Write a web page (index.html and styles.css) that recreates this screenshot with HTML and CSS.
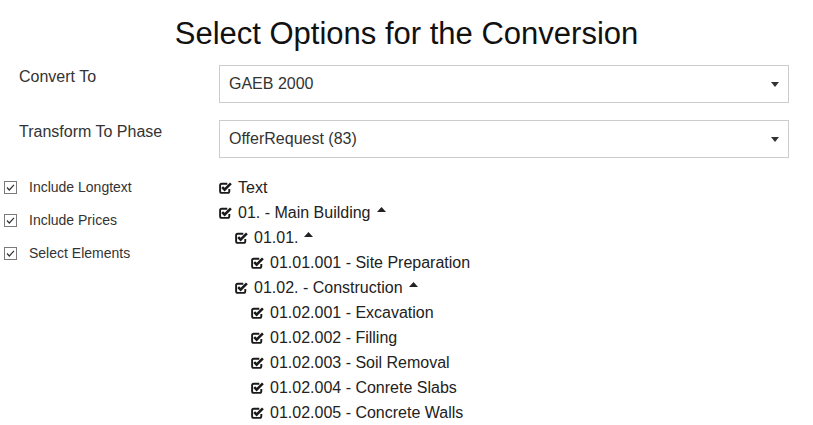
FILE: index.html
```html
<!DOCTYPE html>
<html lang="en">
<head>
<meta charset="utf-8">
<title>Select Options for the Conversion</title>
<link rel="stylesheet" href="styles.css">
</head>
<body>
<div class="page">
  <h1 class="title">Select Options for the Conversion</h1>

  <div class="form-row">
    <label class="form-label">Convert To</label>
    <div class="select">
      <span>GAEB 2000</span>
      <svg class="select-arrow" width="8" height="5" viewBox="0 0 8 5"><path d="M0 0H8L4 5Z"/></svg>
    </div>
  </div>

  <div class="form-row">
    <label class="form-label">Transform To Phase</label>
    <div class="select">
      <span>OfferRequest (83)</span>
      <svg class="select-arrow" width="8" height="5" viewBox="0 0 8 5"><path d="M0 0H8L4 5Z"/></svg>
    </div>
  </div>

  <div class="options">
    <ul class="side-opts">
      <li class="side-opt">
        <svg class="cb" width="13" height="13" viewBox="0 0 13 13"><rect x="0.5" y="0.5" width="12" height="12" class="cb-box"/><path d="M3 6.5L5.3 9L10 3.8" class="cb-check"/></svg>
        <span>Include Longtext</span>
      </li>
      <li class="side-opt">
        <svg class="cb" width="13" height="13" viewBox="0 0 13 13"><rect x="0.5" y="0.5" width="12" height="12" class="cb-box"/><path d="M3 6.5L5.3 9L10 3.8" class="cb-check"/></svg>
        <span>Include Prices</span>
      </li>
      <li class="side-opt">
        <svg class="cb" width="13" height="13" viewBox="0 0 13 13"><rect x="0.5" y="0.5" width="12" height="12" class="cb-box"/><path d="M3 6.5L5.3 9L10 3.8" class="cb-check"/></svg>
        <span>Select Elements</span>
      </li>
    </ul>

    <ul class="tree">
      <li class="node lvl0"><svg class="chk" width="13" height="12" viewBox="0 0 13 12"><path class="chk-box" d="M8.3 1.7H2.7Q1.1 1.7 1.1 3.3V9.3Q1.1 10.9 2.7 10.9H8.7Q10.3 10.9 10.3 9.3V7"/><path class="chk-mark" d="M3.2 5.2L5.6 7.6L11.9 1.3"/></svg>Text</li>
      <li class="node lvl0"><svg class="chk" width="13" height="12" viewBox="0 0 13 12"><path class="chk-box" d="M8.3 1.7H2.7Q1.1 1.7 1.1 3.3V9.3Q1.1 10.9 2.7 10.9H8.7Q10.3 10.9 10.3 9.3V7"/><path class="chk-mark" d="M3.2 5.2L5.6 7.6L11.9 1.3"/></svg>01. - Main Building<svg class="caret" width="9" height="5" viewBox="0 0 9 5"><path d="M0 5H9L4.5 0Z"/></svg></li>
      <li class="node lvl1"><svg class="chk" width="13" height="12" viewBox="0 0 13 12"><path class="chk-box" d="M8.3 1.7H2.7Q1.1 1.7 1.1 3.3V9.3Q1.1 10.9 2.7 10.9H8.7Q10.3 10.9 10.3 9.3V7"/><path class="chk-mark" d="M3.2 5.2L5.6 7.6L11.9 1.3"/></svg>01.01.<svg class="caret" width="9" height="5" viewBox="0 0 9 5"><path d="M0 5H9L4.5 0Z"/></svg></li>
      <li class="node lvl2"><svg class="chk" width="13" height="12" viewBox="0 0 13 12"><path class="chk-box" d="M8.3 1.7H2.7Q1.1 1.7 1.1 3.3V9.3Q1.1 10.9 2.7 10.9H8.7Q10.3 10.9 10.3 9.3V7"/><path class="chk-mark" d="M3.2 5.2L5.6 7.6L11.9 1.3"/></svg>01.01.001 - Site Preparation</li>
      <li class="node lvl1"><svg class="chk" width="13" height="12" viewBox="0 0 13 12"><path class="chk-box" d="M8.3 1.7H2.7Q1.1 1.7 1.1 3.3V9.3Q1.1 10.9 2.7 10.9H8.7Q10.3 10.9 10.3 9.3V7"/><path class="chk-mark" d="M3.2 5.2L5.6 7.6L11.9 1.3"/></svg>01.02. - Construction<svg class="caret" width="9" height="5" viewBox="0 0 9 5"><path d="M0 5H9L4.5 0Z"/></svg></li>
      <li class="node lvl2"><svg class="chk" width="13" height="12" viewBox="0 0 13 12"><path class="chk-box" d="M8.3 1.7H2.7Q1.1 1.7 1.1 3.3V9.3Q1.1 10.9 2.7 10.9H8.7Q10.3 10.9 10.3 9.3V7"/><path class="chk-mark" d="M3.2 5.2L5.6 7.6L11.9 1.3"/></svg>01.02.001 - Excavation</li>
      <li class="node lvl2"><svg class="chk" width="13" height="12" viewBox="0 0 13 12"><path class="chk-box" d="M8.3 1.7H2.7Q1.1 1.7 1.1 3.3V9.3Q1.1 10.9 2.7 10.9H8.7Q10.3 10.9 10.3 9.3V7"/><path class="chk-mark" d="M3.2 5.2L5.6 7.6L11.9 1.3"/></svg>01.02.002 - Filling</li>
      <li class="node lvl2"><svg class="chk" width="13" height="12" viewBox="0 0 13 12"><path class="chk-box" d="M8.3 1.7H2.7Q1.1 1.7 1.1 3.3V9.3Q1.1 10.9 2.7 10.9H8.7Q10.3 10.9 10.3 9.3V7"/><path class="chk-mark" d="M3.2 5.2L5.6 7.6L11.9 1.3"/></svg>01.02.003 - Soil Removal</li>
      <li class="node lvl2"><svg class="chk" width="13" height="12" viewBox="0 0 13 12"><path class="chk-box" d="M8.3 1.7H2.7Q1.1 1.7 1.1 3.3V9.3Q1.1 10.9 2.7 10.9H8.7Q10.3 10.9 10.3 9.3V7"/><path class="chk-mark" d="M3.2 5.2L5.6 7.6L11.9 1.3"/></svg>01.02.004 - Conrete Slabs</li>
      <li class="node lvl2"><svg class="chk" width="13" height="12" viewBox="0 0 13 12"><path class="chk-box" d="M8.3 1.7H2.7Q1.1 1.7 1.1 3.3V9.3Q1.1 10.9 2.7 10.9H8.7Q10.3 10.9 10.3 9.3V7"/><path class="chk-mark" d="M3.2 5.2L5.6 7.6L11.9 1.3"/></svg>01.02.005 - Concrete Walls</li>
    </ul>
  </div>
</div>
</body>
</html>
```

FILE: styles.css
```css
html, body {
  margin: 0;
  padding: 0;
  background: #ffffff;
}

body {
  font-family: "Liberation Sans", Arial, sans-serif;
  color: #333333;
}

.page {
  width: 813px;
  overflow: hidden;
}

.title {
  margin: 0;
  padding-top: 17px;
  font-size: 31px;
  font-weight: normal;
  line-height: 34px;
  text-align: center;
  color: #111111;
}

.form-row {
  display: grid;
  grid-template-columns: 200px 570px;
  padding-left: 19px;
  margin-top: 14px;
}

.form-row + .form-row {
  margin-top: 17px;
}

.form-label {
  font-size: 16px;
  line-height: 23px;
  color: #333333;
}

.select {
  box-sizing: border-box;
  height: 38px;
  border: 1px solid #cccccc;
  padding: 0 9px 0 9px;
  display: flex;
  align-items: center;
  justify-content: space-between;
  font-size: 16px;
  color: #333333;
  background: #ffffff;
}

.select-arrow {
  fill: #333333;
  margin-top: 1px;
}

.options {
  display: grid;
  grid-template-columns: 219px 1fr;
  margin-top: 17px;
}

.side-opts {
  list-style: none;
  margin: 0;
  padding: 2px 0 0 4px;
}

.side-opt {
  display: flex;
  align-items: center;
  gap: 12px;
  font-size: 14px;
  line-height: 20px;
  margin-bottom: 13px;
  color: #333333;
}

.cb {
  flex: none;
}

.cb-box {
  fill: #ffffff;
  stroke: #7a7a7a;
  stroke-width: 1;
}

.cb-check {
  fill: none;
  stroke: #333333;
  stroke-width: 1.2;
}

.tree {
  list-style: none;
  margin: 0;
  padding: 0;
}

.node {
  font-size: 16px;
  line-height: 25px;
  color: #222222;
  white-space: nowrap;
}

.lvl1 {
  padding-left: 16px;
}

.lvl2 {
  padding-left: 32px;
}

.chk {
  vertical-align: -0.5px;
  margin-right: 6px;
}

.chk-box {
  fill: none;
  stroke: #1a1a1a;
  stroke-width: 1.9;
}

.chk-mark {
  fill: none;
  stroke: #1a1a1a;
  stroke-width: 2.6;
}

.caret {
  fill: #222222;
  margin-left: 6px;
  vertical-align: 6px;
}
```
